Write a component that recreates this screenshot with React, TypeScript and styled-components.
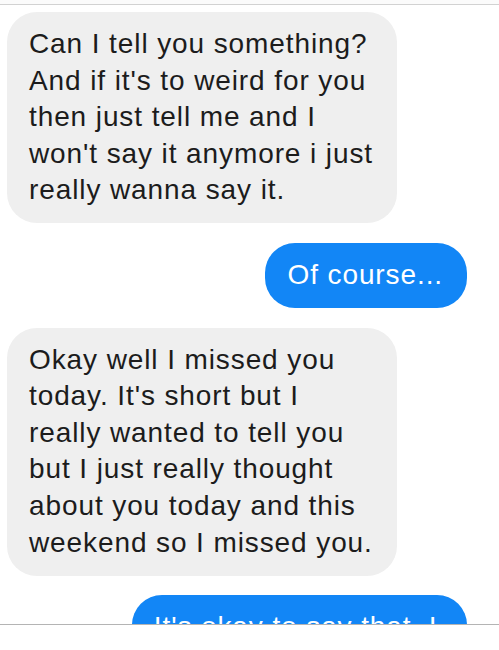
import React from "react";
import styled, { createGlobalStyle } from "styled-components";

const GlobalStyle = createGlobalStyle`
  *, *::before, *::after {
    box-sizing: border-box;
  }
  html, body {
    margin: 0;
    padding: 0;
    background: #ffffff;
  }
  body {
    font-family: "Liberation Sans", Arial, sans-serif;
  }
`;

const Screen = styled.div`
  width: 499px;
  height: 650px;
  display: flex;
  flex-direction: column;
  background: #ffffff;
  overflow: hidden;
`;

const TopBar = styled.div`
  height: 5px;
  flex-shrink: 0;
  background: #fbfbfb;
  border-bottom: 1px solid #d2d2d2;
`;

const Thread = styled.main`
  flex: 0 0 619px;
  overflow: hidden;
  display: flex;
  flex-direction: column;
  gap: 19.5px;
  padding: 7px 32px 0 7px;
`;

const Row = styled.div<{ $mine?: boolean }>`
  display: flex;
  flex-shrink: 0;
  justify-content: ${(p) => (p.$mine ? "flex-end" : "flex-start")};
`;

const Bubble = styled.div<{ $mine?: boolean }>`
  white-space: pre-line;
  padding: 14px 24px 14.5px 22px;
  border-radius: 30px;
  font-size: 28px;
  line-height: 36.6px;
  letter-spacing: 0.9px;
  background: ${(p) => (p.$mine ? "#1286f6" : "#efefef")};
  color: ${(p) => (p.$mine ? "#ffffff" : "#1c1c1c")};
`;

const Footer = styled.div`
  flex: 1;
  border-top: 1px solid #b4b4b4;
  background: #ffffff;
`;

type Message = { text: string; mine?: boolean };

const messages: Message[] = [
  {
    text: "Can I tell you something?\nAnd if it's to weird for you\nthen just tell me and I\nwon't say it anymore i just\nreally wanna say it.",
  },
  { text: "Of course...", mine: true },
  {
    text: "Okay well I missed you\ntoday. It's short but I\nreally wanted to tell you\nbut I just really thought\nabout you today and this\nweekend so I missed you.",
  },
  { text: "It's okay to say that. I\nmissed you too today.", mine: true },
];

const App: React.FC = () => {
  return (
    <>
      <GlobalStyle />
      <Screen>
        <TopBar />
        <Thread>
          {messages.map((m, i) => (
            <Row key={i} $mine={m.mine}>
              <Bubble $mine={m.mine}>{m.text}</Bubble>
            </Row>
          ))}
        </Thread>
        <Footer />
      </Screen>
    </>
  );
};

export default App;
